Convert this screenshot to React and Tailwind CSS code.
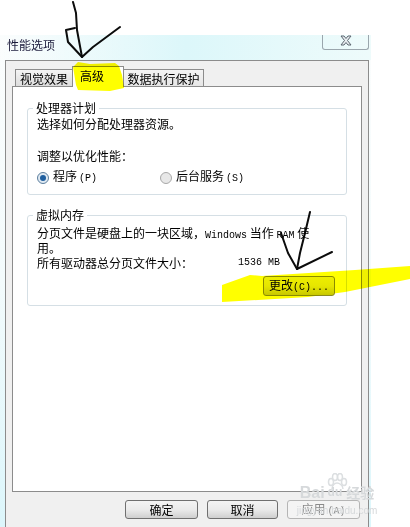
const latin = "font-['Liberation_Mono',monospace] text-[10px]";

function GroupBox({ title, className, children }) {
  return (
    <fieldset className={`border border-[#d5dfe5] rounded-[3px] pl-[9px] ${className}`}>
      <legend className="-ml-[4px] px-[3px] leading-[12px]">{title}</legend>
      {children}
    </fieldset>
  );
}

function Radio({ checked, label, hotkey }) {
  return (
    <div className="flex items-center gap-[4px]">
      <span
        className={`w-[12px] h-[12px] rounded-full border flex items-center justify-center ${
          checked ? "border-[#5d7f9e] bg-[#dfe9f2]" : "border-[#a8a8a8] bg-[#e8e8e8]"
        }`}
      >
        {checked && <span className="w-[6px] h-[6px] rounded-full bg-[#1f5f9f]" />}
      </span>
      <span>
        {label}
        <span className={`${latin} ml-[2px]`}>({hotkey})</span>
      </span>
    </div>
  );
}

function DlgButton({ children, disabled, className = "" }) {
  return (
    <button
      className={`h-[19px] rounded-[3px] border leading-[15px] ${
        disabled
          ? "border-[#b5b5b5] bg-[#f4f4f4] text-[#8a8a8a]"
          : "border-[#707070] bg-gradient-to-b from-[#f4f4f4] via-[#ebebeb] to-[#cfcfcf] text-black"
      } ${className}`}
    >
      {children}
    </button>
  );
}

export default function App() {
  return (
    <div className="relative w-[410px] h-[527px] overflow-hidden bg-white text-[12px] leading-[12px] text-black font-['Noto_Sans_CJK_SC',sans-serif]">
      <div className="w-[371px] h-full pt-[35px]">
        <div className="h-full flex flex-col bg-gradient-to-b from-[#fbfdfd] via-[#f3fbfc] to-[#dcf6fb]">
          {/* title bar */}
          <div className="h-[25px] shrink-0 flex items-start justify-between pl-[7px] bg-gradient-to-r from-transparent via-[#dcf7fa] to-[#eefbfb]">
            <span className="mt-[4px] text-[#1c1c3c]">性能选项</span>
            <div className="w-[47px] h-[15px] mr-[2px] border border-t-0 border-[#9aa6ad] rounded-b-[3px] flex justify-center">
              <svg width="12" height="11" viewBox="0 0 12 11">
                <path d="M1 1h3l2 2.500 2-2.500h3l-3.500 4.500 3.500 4.500h-3l-2-2.500-2 2.500h-3l3.500-4.500z" fill="#e8edf0" stroke="#5c6670" strokeWidth="1" />
              </svg>
            </div>
          </div>

          {/* dialog client area */}
          <div className="flex-1 ml-[5px] mr-[2px] border border-b-0 border-[#8c8c8c] bg-[#f0f0f0] px-[6px] flex flex-col">
            <div className="h-[26px] shrink-0 flex items-end pl-[3px] relative z-10 -mb-px">
              <div className="w-[57px] h-[18px] border border-r-0 border-[#8c8c8c] bg-gradient-to-b from-[#f4f4f4] to-[#dcdcdc] text-center leading-[17px]">视觉效果</div>
              <div className="w-[52px] h-[21px] border border-b-0 border-[#8c8c8c] bg-white pl-[7px] leading-[18px]">高级</div>
              <div className="w-[80px] h-[18px] border border-l-0 border-[#8c8c8c] bg-gradient-to-b from-[#f4f4f4] to-[#e6e6e6] text-center leading-[17px]">数据执行保护</div>
            </div>

            {/* tab page */}
            <div className="h-[406px] shrink-0 border border-[#8c8c8c] bg-white pt-[15px] px-[14px]">
              <GroupBox title="处理器计划" className="h-[93px]">
                <p className="mt-[4px]">选择如何分配处理器资源。</p>
                <p className="mt-[20px]">调整以优化性能：</p>
                <div className="flex mt-[8px]">
                  <div className="w-[123px]">
                    <Radio checked label="程序" hotkey="P" />
                  </div>
                  <Radio label="后台服务" hotkey="S" />
                </div>
              </GroupBox>

              <GroupBox title="虚拟内存" className="h-[97px] mt-[14px]">
                <p className="mt-[6px] leading-[12px]">
                  分页文件是硬盘上的一块区域，<span className={latin}>Windows</span> 当作 <span className={latin}>RAM</span> 使
                  <br />
                  用。
                </p>
                <div className="flex mt-[3px]">
                  <span className="w-[201px]">所有驱动器总分页文件大小：</span>
                  <span className={latin}>1536 MB</span>
                </div>
                <div className="flex justify-end pr-[11px] mt-[7px]">
                  <button className="w-[72px] h-[20px] rounded-[3px] border border-[#8a8a20] bg-gradient-to-b from-[#eeee10] via-[#e6e600] to-[#c8c800] leading-[16px]">
                    更改<span className={latin}>(C)...</span>
                  </button>
                </div>
              </GroupBox>
            </div>

            {/* bottom buttons */}
            <div className="flex justify-end gap-[9px] pt-[8px] pr-[2px]">
              <DlgButton className="w-[73px]">确定</DlgButton>
              <DlgButton className="w-[71px]">取消</DlgButton>
              <DlgButton disabled className="w-[73px]">
                应用<span className={`${latin} ml-[2px]`}>(A)</span>
              </DlgButton>
            </div>
          </div>
        </div>
      </div>

      {/* marker annotations drawn over the screenshot */}
      <svg className="absolute inset-0 z-20 mix-blend-multiply pointer-events-none" width="410" height="527" viewBox="0 0 410 527">
        <g fill="#ffff00">
          <path d="M73 67L78 62L90 64L115 63L119 66L122 75L124 88L110 91L78 90L76 85Z" />
          <path d="M222 285L250 275L262 276L355 270L410 266L410 279L345 292L308 297L222 302Z" />
        </g>
        <g fill="none" stroke="#0c0c0c" strokeWidth="2" strokeLinecap="round" strokeLinejoin="round">
          <path d="M73 2L76 13L77 30L82 57L93 47L120 27" />
          <path d="M82 57L68 42L66 30L75 28" />
          <path d="M310 212L305 233L300 253L297 269L332 252" />
          <path d="M297 269L288 253L281 233" />
        </g>
      </svg>

      {/* watermark */}
      <div className="absolute z-30 left-[292px] top-[473px] w-[90px] flex flex-col items-center text-[#d6d9db] pointer-events-none">
        <svg width="26" height="18" viewBox="0 0 26 18" fill="none" stroke="#dcdfe1" strokeWidth="1.500">
          <ellipse cx="7" cy="9" rx="2.500" ry="3.500" />
          <ellipse cx="11" cy="4" rx="2.500" ry="3.500" />
          <ellipse cx="16" cy="4" rx="2.500" ry="3.500" />
          <ellipse cx="20" cy="9" rx="2.500" ry="3.500" />
          <path d="M8 16c0-4 3-6 5-6s6 2 6 6" />
        </svg>
        <div className="flex items-center -mt-[6px] font-['Liberation_Sans',sans-serif] font-bold text-[16px] leading-[15px] whitespace-nowrap">
          Bai<span className="text-[12px] mx-[3px]">du</span>
          <span className="font-['Noto_Sans_CJK_SC',sans-serif] text-[14px] ml-[1px]">经验</span>
        </div>
        <div className="mt-[5px] font-['Liberation_Sans',sans-serif] text-[10px] leading-[11px] whitespace-nowrap">jingyan.baidu.com</div>
      </div>
    </div>
  );
}
